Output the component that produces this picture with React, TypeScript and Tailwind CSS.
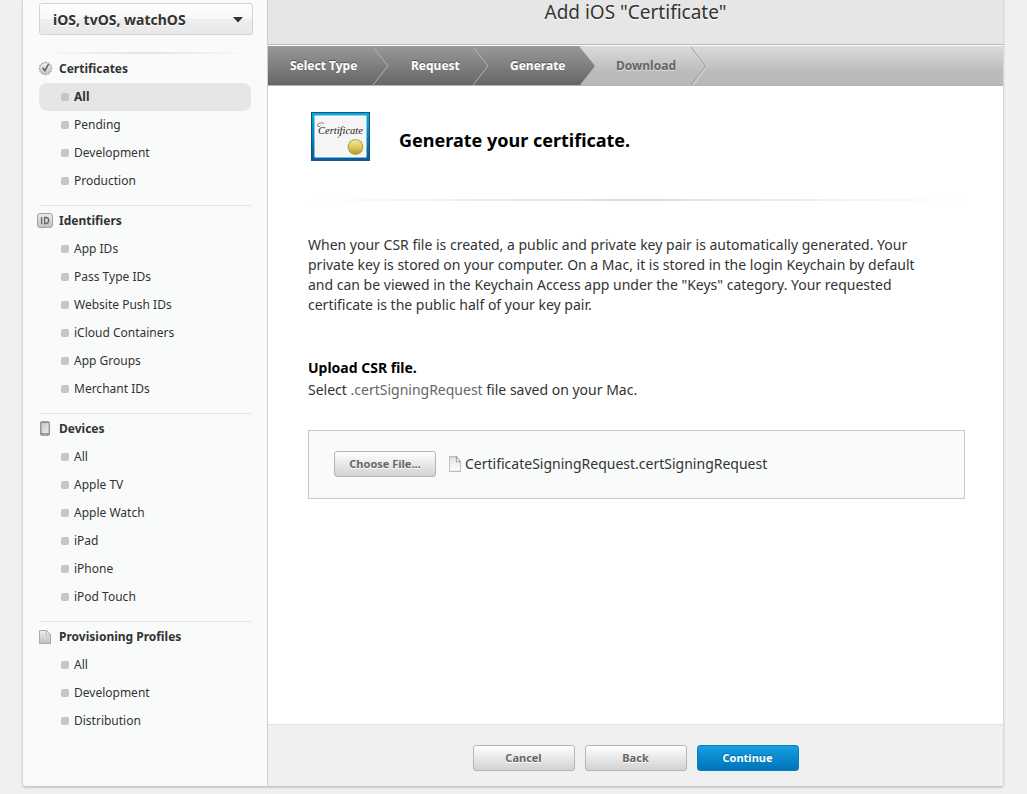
import React from "react";

type Section = { title: string; icon: React.ReactNode; items: string[]; active?: string };

function SealIcon() {
  const points = Array.from({ length: 24 }, (_, i) => {
    const r = i % 2 ? 5.9 : 7.2;
    const a = (i * Math.PI) / 12;
    return `${(7.5 + r * Math.cos(a)).toFixed(2)},${(7.5 + r * Math.sin(a)).toFixed(2)}`;
  }).join(" ");
  return (
    <svg width="15" height="15" viewBox="0 0 15 15" aria-hidden="true">
      <defs>
        <linearGradient id="seal" x1="0" y1="0" x2="0" y2="1">
          <stop offset="0" stopColor="#f2f2f2" />
          <stop offset="1" stopColor="#c2c3c5" />
        </linearGradient>
      </defs>
      <polygon points={points} fill="#aeb0b2" />
      <circle cx="7.5" cy="7.5" r="5.4" fill="url(#seal)" />
      <path d="M4.600 6.800 6.900 9.600 10.500 3.200" fill="none" stroke="#5f6264" strokeWidth="1.5" />
    </svg>
  );
}

function IdIcon() {
  return (
    <svg width="16" height="15" viewBox="0 0 16 15" aria-hidden="true">
      <defs>
        <linearGradient id="idg" x1="0" y1="0" x2="0" y2="1">
          <stop offset="0" stopColor="#ececec" />
          <stop offset="1" stopColor="#bfc0c3" />
        </linearGradient>
      </defs>
      <rect x="0.5" y="0.5" width="15" height="14" rx="2.5" fill="url(#idg)" stroke="#a3a4a7" />
      <path d="M4.6 4v7M7.6 4.5v6h1.2c2 0 2.9-1.1 2.9-3s-.9-3-2.9-3z" fill="none" stroke="#66686b" strokeWidth="1.3" />
    </svg>
  );
}

function DeviceIcon() {
  return (
    <svg width="10" height="15" viewBox="0 0 11 16" aria-hidden="true">
      <defs>
        <linearGradient id="dev" x1="0" y1="0" x2="1" y2="1">
          <stop offset="0" stopColor="#c4c5c8" />
          <stop offset="1" stopColor="#ececed" />
        </linearGradient>
      </defs>
      <rect x="0.5" y="0.5" width="10" height="15" rx="1.5" fill="#919296" stroke="#8b8d91" />
      <rect x="1.5" y="2" width="8" height="11" fill="url(#dev)" />
      <rect x="4.5" y="13.8" width="2" height="1" fill="#d8d8da" />
    </svg>
  );
}

function PageIcon({ light = false }: { light?: boolean }) {
  const id = light ? "pgl" : "pgd";
  return (
    <svg width="12" height={light ? 16 : 14} viewBox="0 0 13 14" preserveAspectRatio="none" className="shrink-0" aria-hidden="true">
      <defs>
        <linearGradient id={id} x1="0" y1="0" x2="0" y2="1">
          <stop offset="0" stopColor={light ? "#e0e0e0" : "#ededee"} />
          <stop offset="1" stopColor={light ? "#ffffff" : "#bfc0c3"} />
        </linearGradient>
      </defs>
      <path d="M.5.5h7.500l4.500 4.500v8.500H.5z" fill={`url(#${id})`} stroke={light ? "#bcbcbc" : "#a3a4a7"} />
      <path d="M8 .5v4.500h4.500z" fill="#fafafa" stroke={light ? "#8e8e8e" : "#a3a4a7"} strokeWidth="0.8" />
    </svg>
  );
}

function CertificateArt() {
  const seal = Array.from({ length: 40 }, (_, i) => {
    const r = i % 2 ? 7.3 : 8.3;
    const a = (i * Math.PI) / 20;
    return `${(44.5 + r * Math.cos(a)).toFixed(2)},${(35 + r * Math.sin(a)).toFixed(2)}`;
  }).join(" ");
  return (
    <svg width="59" height="49" viewBox="0 0 59 49" role="img" aria-label="Certificate">
      <defs>
        <linearGradient id="frame" x1="0" y1="0" x2="0" y2="1">
          <stop offset="0" stopColor="#07addb" />
          <stop offset="1" stopColor="#045b9f" />
        </linearGradient>
        <linearGradient id="gold" x1="0" y1="0" x2="0" y2="1">
          <stop offset="0" stopColor="#eee7a0" />
          <stop offset="0.5" stopColor="#dccb5b" />
          <stop offset="1" stopColor="#b39a2c" />
        </linearGradient>
      </defs>
      <rect x="0.5" y="0.5" width="58" height="48" fill="url(#frame)" stroke="#1c5187" />
      <rect x="4" y="4" width="51" height="41" fill="#f5f5f5" stroke="#ffffff" />
      <text x="7" y="22" fontFamily="'Liberation Serif', serif" fontStyle="italic" fontSize="10.5" fill="#222">
        Certificate
      </text>
      <path d="M13 11.500c-3-1.500-7 0-6.500 2.200.3 1.300 2.500 1.300 3 0M30 21c-1 3-2 4.500-3.500 4.500" fill="none" stroke="#333" strokeWidth="0.6" />
      <polygon points={seal} fill="#b19a35" />
      <circle cx="44.5" cy="35" r="7" fill="url(#gold)" />
    </svg>
  );
}

const sections: Section[] = [
  { title: "Certificates", icon: <SealIcon />, items: ["All", "Pending", "Development", "Production"], active: "All" },
  {
    title: "Identifiers",
    icon: <IdIcon />,
    items: ["App IDs", "Pass Type IDs", "Website Push IDs", "iCloud Containers", "App Groups", "Merchant IDs"],
  },
  { title: "Devices", icon: <DeviceIcon />, items: ["All", "Apple TV", "Apple Watch", "iPad", "iPhone", "iPod Touch"] },
  { title: "Provisioning Profiles", icon: <PageIcon />, items: ["All", "Development", "Distribution"] },
];

function Sidebar() {
  return (
    <aside className="w-[245px] shrink-0 border-r border-[#cfcfcf] bg-[#f9fbfa] pt-[3px] pr-4 pb-[41px] pl-4">
      <div className="relative -mr-0.5">
        <select
          aria-label="Platform"
          className="h-8 w-full appearance-none rounded-[3px] border border-[#d4d5d5] bg-[linear-gradient(#fff,#f7f7f7_50%,#eee_50%,#e8e8e8)] pl-[13px] text-[14px] font-bold text-[#333] [text-shadow:0_1px_0_#fff]"
        >
          <option>iOS, tvOS, watchOS</option>
        </select>
        <svg className="pointer-events-none absolute top-[14px] right-[10px]" width="10" height="6" viewBox="0 0 10 6" aria-hidden="true">
          <path d="M0 0h10L5 5.500z" fill="#333" />
        </svg>
      </div>
      <div className="mt-[17px] h-0.5 bg-linear-to-r from-transparent via-[#e2e3e3] to-transparent" />
      <nav>
        {sections.map((s, i) => (
          <section key={s.title} className={i ? "border-t border-[#e2e3e3] pb-[10px]" : "pb-[10px]"}>
            <h2 className="flex h-[29px] items-center text-[12px] font-bold text-[#333]">
              <span className="-ml-1 flex w-5 shrink-0 justify-center">{s.icon}</span>
              <span className="pl-1">{s.title}</span>
            </h2>
            <ul>
              {s.items.map((item) => (
                <li key={item}>
                  <a
                    href="#"
                    className={
                      item === s.active
                        ? "flex h-7 items-center gap-[5px] rounded-lg bg-[#e6e6e6] pl-[22px] text-[12px] font-bold text-[#333]"
                        : "flex h-7 items-center gap-[5px] pl-[22px] text-[12px] text-[#333]"
                    }
                  >
                    <span className="size-2 rounded-[2px] bg-[#c5c6ca]" />
                    {item}
                  </a>
                </li>
              ))}
            </ul>
          </section>
        ))}
      </nav>
    </aside>
  );
}

function Chevron({ light = false }: { light?: boolean }) {
  return (
    <svg width="17" height="39" viewBox="0 0 17 39" className="shrink-0" aria-hidden="true">
      {light && <path d="M2 1 17 20 3 39" fill="none" stroke="#e2e2e2" />}
      <path d="M1 1 16 20 1 39" fill="none" stroke={light ? "#999" : "#b4b4b4"} />
    </svg>
  );
}

function Steps() {
  return (
    <ol className="flex h-10 border-b border-[#b4b4b4] bg-linear-to-b from-[#dbdbdb] via-[#bcbcbc] via-65% to-[#b8b8b8] text-[12px] font-bold text-white">
      <li className="flex w-[121px] items-center justify-between bg-linear-to-b from-[#999] to-[#666] pl-[22px] [text-shadow:0_-1px_0_#555]">
        Select Type
        <Chevron />
      </li>
      <li className="flex w-[100px] items-center justify-between bg-linear-to-b from-[#999] to-[#666] pl-[22px] [text-shadow:0_-1px_0_#555]">
        Request
        <Chevron />
      </li>
      <li className="flex w-[106px] items-center [text-shadow:0_-1px_0_#555]" aria-current="step">
        <span className="flex h-full flex-1 items-center bg-linear-to-b from-[#999] to-[#666] pl-[21px]">Generate</span>
        <svg width="16" height="39" viewBox="0 0 16 39" className="shrink-0" aria-hidden="true">
          <defs>
            <linearGradient id="tip" x1="0" y1="0" x2="0" y2="1">
              <stop offset="0" stopColor="#999" />
              <stop offset="1" stopColor="#666" />
            </linearGradient>
          </defs>
          <path d="M0 0 16 20 1 39H0z" fill="url(#tip)" />
        </svg>
      </li>
      <li className="flex w-[112px] items-center justify-between pl-[21px] text-[#666] [text-shadow:0_1px_0_#e0e0e0]">
        Download
        <Chevron light />
      </li>
    </ol>
  );
}

const grayButton =
  "h-[26px] w-[102px] rounded-[3px] border border-[#b5b5b5] bg-linear-to-b from-white to-[#d2d2d2] text-[11px] font-bold text-[#666] [text-shadow:0_1px_0_#fff]";

export default function App() {
  return (
    <div className="min-h-screen bg-[#f0f0f0] pr-[23px] pb-[6px] pl-[22px] font-['Noto_Sans','Open_Sans',sans-serif] text-[#333]">
      <div className="flex overflow-hidden rounded-b-[4px] border-x border-b border-[#c6c6c6] border-x-[#d8d8d8] bg-white shadow-[0_1px_2px_rgba(0,0,0,0.15)]">
        <Sidebar />
        <main className="flex min-w-0 flex-1 flex-col">
          <header className="border-b border-[#b9b9b9] bg-[#e6e6e6] pb-5">
            <h1 className="text-center text-[19px] leading-6 [text-shadow:0_1px_0_#fff]">Add iOS "Certificate"</h1>
          </header>
          <div className="pt-px">
            <Steps />
          </div>
          <div className="pt-[26px] pr-[38px] pl-10">
            <div className="flex items-center gap-[29px] pl-[3px]">
              <CertificateArt />
              <h2 className="pt-1.5 text-[18px] leading-6 font-bold text-black">Generate your certificate.</h2>
            </div>
            <div className="mt-[38px] h-0.5 bg-linear-to-r from-transparent via-[#dcdcdc] to-transparent" />
            <p className="mt-[34px] pr-8 text-[14px] leading-5">
              When your CSR file is created, a public and private key pair is automatically generated. Your private key is
              stored on your computer. On a Mac, it is stored in the login Keychain by default and can be viewed in the
              Keychain Access app under the "Keys" category. Your requested certificate is the public half of your key pair.
            </p>
            <h3 className="mt-[42px] text-[14px] leading-[22px] font-bold text-black">Upload CSR file.</h3>
            <p className="text-[14px] leading-[22px]">
              Select <span className="text-[#666]">.certSigningRequest</span> file saved on your Mac.
            </p>
            <div className="mt-[29px] flex items-center border border-[#c8c8c8] bg-[#f9fbfa] pt-5 pr-5 pb-[21px] pl-[25px]">
              <button type="button" className={grayButton}>
                Choose File...
              </button>
              <span className="flex items-center gap-1 pl-[13px] text-[14px] leading-[26px]">
                <PageIcon light />
                CertificateSigningRequest.certSigningRequest
              </span>
            </div>
          </div>
          <footer className="mt-auto flex justify-center gap-[10px] border-t border-[#e0e0e0] bg-[#f0f0f0] pt-5 pb-[15px]">
            <button type="button" className={grayButton}>
              Cancel
            </button>
            <button type="button" className={grayButton}>
              Back
            </button>
            <button
              type="button"
              className="h-[26px] w-[102px] rounded-[3px] border border-[#0d7fc0] bg-linear-to-b from-[#15a0e0] to-[#0073ba] text-[11px] font-bold text-white [text-shadow:0_-1px_0_#0067a5]"
            >
              Continue
            </button>
          </footer>
        </main>
      </div>
    </div>
  );
}
